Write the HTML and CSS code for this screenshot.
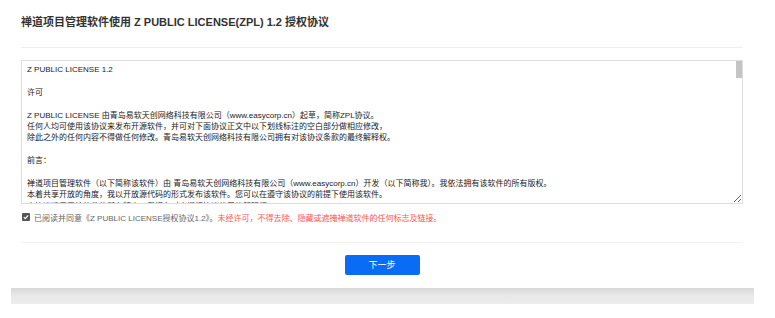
FILE: index.html
```html
<!DOCTYPE html>
<html lang="zh-CN">

<head>
    <meta charset="UTF-8">
    <meta name="viewport" content="width=device-width, initial-scale=1.0">
    <title>授权协议</title>
    <link rel="stylesheet" href="styles.css">
</head>

<body>
    <div class="modal">
        <div class="modal-head">
            <h3 class="title">禅道项目管理软件使用 Z PUBLIC LICENSE(ZPL) 1.2 授权协议</h3>
        </div>
        <div class="modal-body">
            <div class="license-box">
                <textarea class="license" readonly>Z PUBLIC LICENSE 1.2

许可

Z PUBLIC LICENSE 由青岛易软天创网络科技有限公司（www.easycorp.cn）起草，简称ZPL协议。
任何人均可使用该协议来发布开源软件，并可对下面协议正文中以下划线标注的空白部分做相应修改，
除此之外的任何内容不得做任何修改。青岛易软天创网络科技有限公司拥有对该协议条款的最终解释权。

前言：

禅道项目管理软件（以下简称该软件）由 青岛易软天创网络科技有限公司（www.easycorp.cn）开发（以下简称我）。我依法拥有该软件的所有版权。
本着共享开放的角度，我以开放源代码的形式发布该软件。您可以在遵守该协议的前提下使用该软件。
本协议适用于该软件的所有版本，我拥有对本授权协议的最终解释权。

协议许可范围和限制：

1. 您可以将该软件用于商业或者非商业用途。
2. 您可以自由阅读该软件的源代码，可以对其进行修改，并可以将修改后的版本再次发布。
3. 您不得去除、隐藏或遮掩该软件中的任何标志及链接。
4. 您需要在该软件的显著位置保留我的版权信息。
5. 您不得将该软件用于违反国家法律法规的用途。

免责声明：

1. 该软件以"现状"提供，不提供任何明示或暗示的担保。
2. 对于因使用该软件而引起的任何直接或间接损失，我不承担任何责任。
3. 您使用该软件的风险由您自行承担。

协议的终止：

1. 如果您违反了该协议的任何条款，该协议自动终止。
2. 协议终止后，您必须停止使用该软件，并销毁该软件的所有副本。

其他：

1. 该协议的解释和执行适用中华人民共和国法律。
2. 因该协议引起的争议，双方应友好协商解决；协商不成的，任何一方可向我所在地人民法院提起诉讼。
</textarea>
                <span class="scroll-thumb"></span>
            </div>
            <label class="agree">
                <span class="check"><svg width="8" height="8" viewBox="0 0 8 8"><rect width="8" height="8" rx="1" fill="#555"/><path d="M1.8 4.1 L3.3 5.6 L6.2 2.4" fill="none" stroke="#fff" stroke-width="1.2"/></svg></span>
                <span class="agree-text">已阅读并同意《Z PUBLIC LICENSE授权协议1.2》。</span><span class="warn">未经许可，不得去除、隐藏或遮掩禅道软件的任何标志及链接。</span>
            </label>
        </div>
        <div class="modal-foot">
            <button class="btn-next">下一步</button>
        </div>
    </div>
    <div class="shade"></div>
</body>

</html>
```

FILE: styles.css
```css
* {
    margin: 0;
    padding: 0;
    box-sizing: border-box;
}

body {
    font-family: "Liberation Sans", "Noto Sans CJK SC", sans-serif;
    background-color: #fff;
    color: #333;
}

.modal {
    width: 722px;
    margin-left: 21px;
}

.modal-head {
    height: 48px;
    padding-top: 16px;
    border-bottom: 1px solid #eee;
}

.title {
    font-size: 11px;
    line-height: 12px;
    font-weight: bold;
    color: #333;
}

.modal-body {
    padding-top: 12px;
}

.license-box {
    position: relative;
}

.license {
    display: block;
    width: 100%;
    height: 144px;
    border: 1px solid #ddd;
    padding: 3px 12px 3px 5px;
    font-family: "Liberation Sans", "Noto Sans CJK SC", sans-serif;
    font-size: 8px;
    line-height: 11.4px;
    color: #222;
    overflow-y: auto;
    resize: vertical;
    outline: none;
}

/* scrollbar is hidden by the browser, so draw the thumb */
.scroll-thumb {
    position: absolute;
    top: 1px;
    right: 1px;
    width: 6px;
    height: 17px;
    background-color: #c4c4c4;
}

.agree {
    display: flex;
    align-items: center;
    height: 26px;
    padding-left: 1px;
    font-size: 8px;
    color: #666;
}

.check {
    display: flex;
    margin-right: 4px;
}

.warn {
    color: #f55;
}

.modal-foot {
    margin-top: 12px;
    border-top: 1px solid #f2f2f2;
    padding: 11px 0 13px;
    text-align: center;
}

.btn-next {
    width: 75px;
    height: 20px;
    border: none;
    border-radius: 2px;
    background-color: #0a6cf5;
    color: #fff;
    font-family: "Liberation Sans", "Noto Sans CJK SC", sans-serif;
    font-size: 9px;
}

.shade {
    margin: 0 21px 0 11px;
    width: 743px;
    height: 16px;
    background: linear-gradient(#d8d8d8, #e9e9e9 50%, #ececec);
}
```
